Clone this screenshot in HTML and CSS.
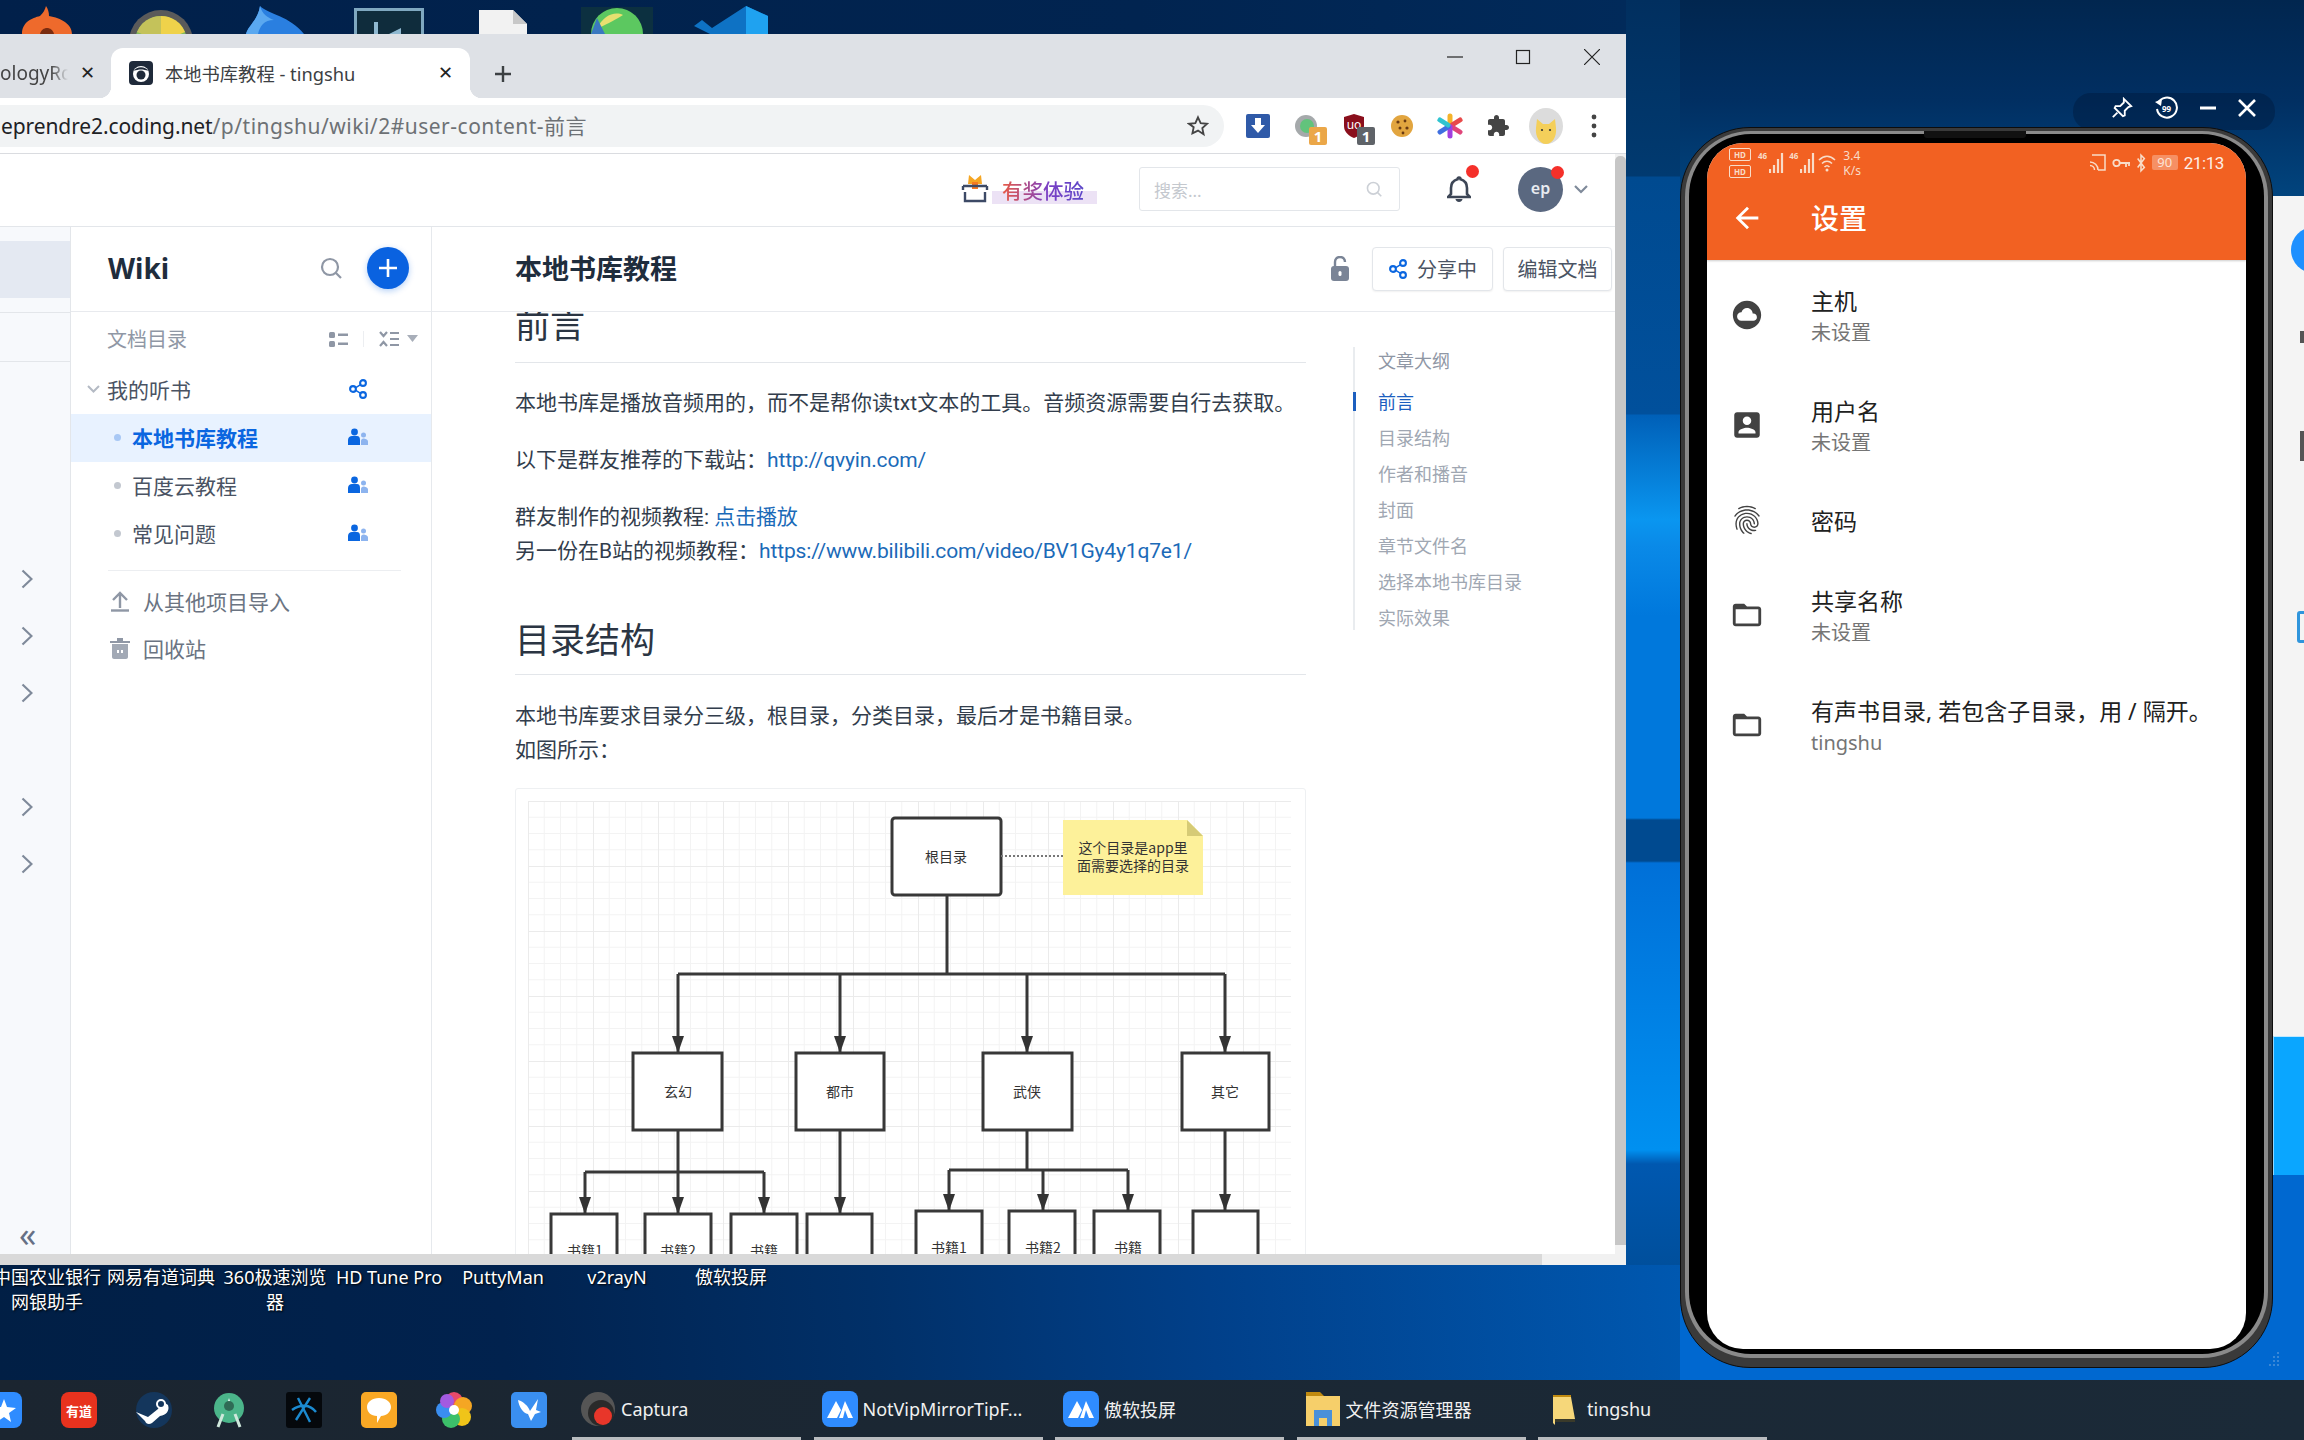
FILE: index.html
```html
<!DOCTYPE html>
<html lang="zh-CN">
<head>
<meta charset="utf-8">
<title>本地书库教程 - tingshu</title>
<link rel="stylesheet" href="styles.css">
</head>
<body>
<svg class="defs" width="0" height="0">
  <defs>
    <symbol id="i-share" viewBox="0 0 18 20"><g fill="none" stroke="currentColor" stroke-width="2.100"><circle cx="4" cy="10" r="2.900"/><circle cx="14" cy="4" r="2.900"/><circle cx="14" cy="16" r="2.900"/><path d="M6.800 8.700l4.400-2.900M6.800 11.300l4.400 2.900" stroke-width="1.400"/></g></symbol>
    <symbol id="i-member" viewBox="0 0 20 18"><circle cx="6.500" cy="4" r="3.400" fill="#0a66e0"/><path d="M0 17v-5c0-2.500 2-4 4-4h5c2 0 3 1.500 3 4v5z" fill="#0a66e0"/><circle cx="15.500" cy="7" r="2.500" fill="#8db4ef"/><path d="M13 17v-4c0-1.500 1-2.500 2.500-2.500S20 11.500 20 13.500V17z" fill="#8db4ef"/></symbol>
    <symbol id="i-search" viewBox="0 0 22 22"><g fill="none" stroke="currentColor" stroke-width="2.200"><circle cx="10" cy="10" r="8"/><path d="M16 16l5 5"/></g></symbol>
    <symbol id="i-chev" viewBox="0 0 12 20"><path d="M1.500 1.500l9 8.500-9 8.500" fill="none" stroke="#7f8a9a" stroke-width="2.200"/></symbol>
    <symbol id="m-cloud" viewBox="0 0 24 24"><path d="M12 2C6.480 2 2 6.480 2 12s4.480 10 10 10 10-4.480 10-10S17.520 2 12 2zm4.500 14H8c-1.660 0-3-1.340-3-3s1.340-3 3-3l.14.010C8.580 8.280 10.130 7 12 7c2.210 0 4 1.790 4 4h.5c1.380 0 2.500 1.120 2.500 2.500S17.880 16 16.500 16z"/></symbol>
    <symbol id="m-account" viewBox="0 0 24 24"><path d="M3 5v14c0 1.100.89 2 2 2h14c1.100 0 2-.9 2-2V5c0-1.100-.9-2-2-2H5c-1.110 0-2 .9-2 2zm12 4c0 1.660-1.340 3-3 3s-3-1.340-3-3 1.340-3 3-3 3 1.340 3 3zm-9 8c0-2 4-3.100 6-3.100s6 1.100 6 3.100v1H6v-1z"/></symbol>
    <symbol id="m-finger" viewBox="0 0 24 24"><path d="M17.810 4.470c-.08 0-.16-.02-.23-.06C15.660 3.420 14 3 12.010 3c-1.980 0-3.860.47-5.570 1.410-.24.13-.54.04-.68-.2-.13-.24-.04-.55.2-.68C7.820 2.520 9.860 2 12.010 2c2.130 0 3.990.47 6.030 1.520.25.13.34.43.21.67-.09.18-.26.28-.44.28zM3.500 9.720c-.1 0-.2-.03-.29-.09-.23-.16-.28-.47-.12-.7.99-1.400 2.250-2.500 3.750-3.270C9.980 4.040 14 4.030 17.150 5.650c1.500.77 2.760 1.860 3.750 3.250.16.22.11.54-.12.7-.23.16-.54.11-.7-.12-.9-1.260-2.040-2.250-3.390-2.940-2.870-1.470-6.540-1.470-9.400.01-1.360.7-2.500 1.700-3.400 2.960-.08.14-.23.21-.39.21zm6.250 12.070c-.13 0-.26-.05-.35-.15-.87-.87-1.340-1.430-2.010-2.640-.69-1.230-1.050-2.730-1.050-4.340 0-2.970 2.540-5.390 5.660-5.390s5.660 2.420 5.660 5.390c0 .28-.22.5-.5.5s-.5-.22-.5-.5c0-2.420-2.090-4.390-4.660-4.390s-4.660 1.970-4.660 4.390c0 1.440.32 2.770.93 3.850.64 1.150 1.080 1.640 1.850 2.420.19.2.19.51 0 .71-.11.1-.24.15-.37.15zm7.170-1.850c-1.190 0-2.240-.3-3.100-.89-1.490-1.010-2.380-2.650-2.380-4.390 0-.28.22-.5.5-.5s.5.22.5.5c0 1.410.72 2.740 1.940 3.560.71.48 1.540.71 2.540.71.24 0 .64-.03 1.040-.1.27-.05.53.13.58.41.05.27-.13.53-.41.58-.57.11-1.070.12-1.210.12zM14.910 22c-.04 0-.09-.01-.13-.02-1.590-.44-2.630-1.030-3.720-2.100-1.400-1.390-2.170-3.240-2.170-5.220 0-1.620 1.380-2.940 3.080-2.940s3.080 1.320 3.080 2.940c0 1.070.93 1.940 2.080 1.940s2.080-.87 2.080-1.940c0-3.770-3.250-6.830-7.250-6.830-2.840 0-5.440 1.580-6.610 4.030-.39.81-.59 1.760-.59 2.800 0 .78.07 2.010.67 3.610.1.26-.03.55-.29.64-.26.1-.55-.04-.64-.29-.49-1.310-.73-2.610-.73-3.960 0-1.200.23-2.290.68-3.240 1.330-2.790 4.280-4.600 7.510-4.600 4.550 0 8.250 3.510 8.250 7.830 0 1.620-1.380 2.940-3.080 2.940s-3.080-1.320-3.080-2.940c0-1.070-.93-1.940-2.080-1.940s-2.080.87-2.080 1.940c0 1.710.66 3.310 1.870 4.510.95.94 1.860 1.460 3.270 1.850.27.07.42.35.35.61-.05.23-.26.38-.47.38z"/></symbol>
    <symbol id="m-folder" viewBox="0 0 24 24"><path fill-rule="evenodd" d="M10 4H4c-1.100 0-2 .9-2 2v12c0 1.100.9 2 2 2h16c1.100 0 2-.9 2-2V8c0-1.100-.9-2-2-2h-8l-2-2zM4 8h16v10H4V8z"/></symbol>
    <symbol id="t-app" viewBox="0 0 36 36"><rect width="36" height="36" rx="8" fill="#2f8cff"/><path d="M5 27L14 10l5 9-4 8zM17 27l6-17 8 17h-5l-3-8-2 8z" fill="#fff"/></symbol>
    <marker id="ah" markerUnits="userSpaceOnUse" markerWidth="17" markerHeight="12" refX="17" refY="6" orient="auto"><path d="M0 0L17 6 0 12z" fill="#333"/></marker>
  </defs>
</svg>

<!-- desktop shortcut icons peeking above the browser -->
<div class="desk-top">
  <div class="desk-icon"><svg width="50" height="28" viewBox="0 0 50 28"><path d="M0 28C0 16 10 12 18 10c3-3 5-6 6-10 2 3 3 6 3 10 12 2 23 8 23 18z" fill="#ee6a2c"/><path d="M18 28c1-4 4-6 7-6s6 2 7 6z" fill="#7a2c10"/></svg></div>
  <div class="desk-icon"><svg width="64" height="26" viewBox="0 0 64 26"><circle cx="32" cy="34" r="32" fill="#5a5a5a"/><circle cx="32" cy="34" r="26" fill="#82b95c"/><path d="M32 8a26 26 0 0 1 24 16L32 34z" fill="#efd24a"/><path d="M32 8a26 26 0 0 0-24 16L32 34z" fill="#c4c25a"/></svg></div>
  <div class="desk-icon"><svg width="58" height="28" viewBox="0 0 58 28"><path d="M0 28C2 20 12 14 14 0c8 8 30 10 44 28z" fill="#2a7fe0"/><path d="M14 0c2 8 8 12 14 14-10 0-14 6-16 14H0C2 20 12 14 14 0z" fill="#5aa8f0"/></svg></div>
  <div class="desk-icon"><svg width="70" height="26" viewBox="0 0 70 26"><rect x="1.500" y="1.500" width="67" height="30" fill="#0f2c3c" stroke="#7fa8c0" stroke-width="3"/><path d="M20 26V14h4v12zM35 26l12-6v6z" fill="#8fb8d0"/></svg></div>
  <div class="desk-icon"><svg width="48" height="24" viewBox="0 0 48 24"><path d="M0 24V0h34l14 14v10z" fill="#f2f2f2"/><path d="M34 0v14h14z" fill="#c8c8c8"/></svg></div>
  <div class="desk-icon"><svg width="72" height="27" viewBox="0 0 72 27"><rect width="72" height="27" fill="#0c3040"/><circle cx="36" cy="27" r="26" fill="#5cc860"/><path d="M16 22C22 8 34 4 42 8c-6 4-14 8-26 14z" fill="#e8e070"/><path d="M10 27l6-16 8 16z" fill="#3a78c0"/></svg></div>
  <div class="desk-icon"><svg width="74" height="28" viewBox="0 0 74 28"><path d="M0 20l8-6 10 8L52 0l22 10v18H22L16 28z" fill="#0e72c4"/><path d="M52 0l22 10v18H52z" fill="#1fa2f0"/></svg></div>
</div>

<div class="browser">
  <div class="tabstrip">
    <div class="tab-old"><span class="tab-old-title">ologyRc</span><span class="tab-x">✕</span></div>
    <div class="tab-active">
      <svg class="favicon" width="24" height="24" viewBox="0 0 24 24"><rect width="24" height="24" rx="4" fill="#1f2a3a"/><circle cx="12" cy="13" r="8" fill="#fff"/><circle cx="12" cy="14" r="4.500" fill="#1f2a3a"/><path d="M5 10c2-5 12-5 14 0-4-2-10-2-14 0z" fill="#1f2a3a"/></svg>
      <span class="tab-title">本地书库教程 - tingshu</span>
      <span class="tab-x">✕</span>
    </div>
    <svg class="tab-plus" width="20" height="20" viewBox="0 0 20 20"><path d="M10 2v16M2 10h16" stroke="#3c4043" stroke-width="2.400"/></svg>
    <div class="wincontrols">
      <div class="wc"><svg width="16" height="16" viewBox="0 0 16 16"><path d="M0 8h16" stroke="#222" stroke-width="1.200"/></svg></div>
      <div class="wc"><svg width="16" height="16" viewBox="0 0 16 16"><rect x="1.500" y="1.500" width="13" height="13" fill="none" stroke="#222" stroke-width="1.200"/></svg></div>
      <div class="wc"><svg width="16" height="16" viewBox="0 0 16 16"><path d="M0 0l16 16M16 0L0 16" stroke="#222" stroke-width="1.200"/></svg></div>
    </div>
  </div>

  <div class="toolbar">
    <div class="omnibox">
      <span class="url"><b class="url-host">eprendre2.coding.net</b>/p/tingshu/wiki/2#user-content-前言</span>
      <svg class="star" width="22" height="22" viewBox="0 0 24 24"><path d="M12 2.500l2.900 6.300 6.900.8-5.100 4.700 1.400 6.800L12 17l-6.100 3.100 1.400-6.800L2.200 9.600l6.900-.8z" fill="none" stroke="#444" stroke-width="2"/></svg>
    </div>
    <div class="extensions">
      <div class="ext"><svg width="24" height="24" viewBox="0 0 24 24"><rect width="24" height="24" rx="2" fill="#2f5aa8"/><path d="M9 4h6v7h4l-7 8-7-8h4z" fill="#fff"/></svg></div>
      <div class="ext"><svg width="24" height="24" viewBox="0 0 24 24"><circle cx="12" cy="12" r="11" fill="#a5a9ab"/><circle cx="13" cy="12" r="7" fill="#62c37c"/></svg><span class="ext-badge badge-orange">1</span></div>
      <div class="ext"><svg width="24" height="24" viewBox="0 0 24 24"><path d="M12 0l10 3v9c0 6-5 10-10 12C7 22 2 18 2 12V3z" fill="#8a0f1c"/><text x="12" y="15" text-anchor="middle" class="ub-text">uo</text></svg><span class="ext-badge badge-gray">1</span></div>
      <div class="ext"><svg width="24" height="24" viewBox="0 0 24 24"><circle cx="12" cy="12" r="11" fill="#e2a53f"/><circle cx="8" cy="8" r="1.600" fill="#6a3a12"/><circle cx="15" cy="7" r="1.400" fill="#6a3a12"/><circle cx="17" cy="14" r="1.600" fill="#6a3a12"/><circle cx="10" cy="14" r="1.500" fill="#6a3a12"/><circle cx="13" cy="19" r="1.400" fill="#6a3a12"/></svg></div>
      <div class="ext"><svg width="26" height="26" viewBox="0 0 26 26"><g stroke-width="5" stroke-linecap="round"><path d="M13 3v9" stroke="#f5b32a"/><path d="M23 7l-8 5" stroke="#e84a4a"/><path d="M23 19l-8-5" stroke="#e0457a"/><path d="M13 23v-9" stroke="#a13fe0"/><path d="M3 19l8-5" stroke="#3f6fe0"/><path d="M3 7l8 5" stroke="#2fc4d0"/></g></svg></div>
      <div class="ext"><svg width="24" height="24" viewBox="0 0 24 24"><path d="M20.500 11H19V7c0-1.100-.9-2-2-2h-4V3.500C13 2.120 11.880 1 10.500 1S8 2.120 8 3.500V5H4c-1.100 0-1.990.9-1.990 2v3.800H3.500c1.490 0 2.700 1.210 2.700 2.700s-1.210 2.700-2.700 2.700H2V20c0 1.100.9 2 2 2h3.800v-1.500c0-1.490 1.210-2.700 2.700-2.700 1.490 0 2.700 1.210 2.700 2.700V22H17c1.100 0 2-.9 2-2v-4h1.500c1.380 0 2.500-1.120 2.500-2.500S21.880 11 20.500 11z" fill="#444"/></svg></div>
      <div class="ext"><svg width="34" height="36" viewBox="0 0 34 36"><ellipse cx="17" cy="18" rx="17" ry="18" fill="#dcdcdc"/><path d="M7 20l1-9 6 5h6l6-5 1 9c1 9-4 16-10 16S6 29 7 20z" fill="#f4cf5a"/><circle cx="13" cy="22" r="1.100" fill="#333"/><circle cx="21" cy="22" r="1.100" fill="#333"/></svg></div>
      <div class="ext"><svg width="6" height="24" viewBox="0 0 6 24"><circle cx="3" cy="3" r="2.400" fill="#444"/><circle cx="3" cy="12" r="2.400" fill="#444"/><circle cx="3" cy="21" r="2.400" fill="#444"/></svg></div>
    </div>
  </div>

  <div class="viewport">
    <div class="page">
      <header class="topbar">
        <div class="promo">
          <svg class="promo-gift" width="30" height="28" viewBox="0 0 30 28"><path d="M9 0l6 5 6-5 1 9H8z" fill="#f5a623"/><path d="M12 7h6v7h-6z" fill="#f57a23"/><path d="M3 11h24M3 11v4M27 11v4M5 17v9h20v-9" fill="none" stroke="#3d4a66" stroke-width="2.400"/></svg>
          <span class="promo-text">有奖体验</span>
        </div>
        <div class="topsearch"><span class="topsearch-ph">搜索...</span><svg class="topsearch-icon" width="16" height="18" viewBox="0 0 22 22"><use href="#i-search"/></svg></div>
        <div class="bell"><svg width="24" height="26" viewBox="0 0 24 26"><path d="M12 1.500c1 0 1.500.8 1.500 1.700C18 4.500 20 8 20 12v6l3 3H1l3-3v-6c0-4 2-7.500 6.500-8.800 0-.9.5-1.700 1.500-1.700z" fill="none" stroke="#3d4656" stroke-width="2.600"/><path d="M8.500 23h7c0 1.500-1.500 3-3.500 3s-3.500-1.500-3.500-3z" fill="#3d4656"/></svg><i class="reddot"></i></div>
        <div class="avatar">ep<i class="reddot"></i></div>
        <svg class="avatar-chev" width="14" height="9" viewBox="0 0 14 9"><path d="M1 1l6 6 6-6" fill="none" stroke="#7f8a9a" stroke-width="2.200"/></svg>
      </header>

      <div class="workspace">
        <nav class="leftnav">
          <div class="nav-top"><div class="nav-active"></div></div>
          <div class="nav-second"></div>
          <div class="nav-rows">
            <div class="nav-row"><svg width="12" height="20"><use href="#i-chev"/></svg></div>
            <div class="nav-row"><svg width="12" height="20"><use href="#i-chev"/></svg></div>
            <div class="nav-row"><svg width="12" height="20"><use href="#i-chev"/></svg></div>
            <div class="nav-row"></div>
            <div class="nav-row"><svg width="12" height="20"><use href="#i-chev"/></svg></div>
            <div class="nav-row"><svg width="12" height="20"><use href="#i-chev"/></svg></div>
          </div>
          <div class="nav-collapse">«</div>
        </nav>

        <aside class="wiki">
          <div class="wiki-head">
            <span class="wiki-title">Wiki</span>
            <svg class="wiki-search" width="22" height="22"><use href="#i-search"/></svg>
            <div class="wiki-add"><svg width="22" height="22" viewBox="0 0 22 22"><path d="M11 2v18M2 11h18" stroke="#fff" stroke-width="2.600"/></svg></div>
          </div>
          <div class="wiki-sub">
            <span class="wiki-sub-title">文档目录</span>
            <svg class="wiki-tool" width="19" height="16" viewBox="0 0 19 16"><g fill="#8f97a5"><rect x="0" y="1" width="6" height="6" rx="1.500"/><rect x="0" y="10" width="6" height="6" rx="1.500"/><rect x="9" y="2.500" width="10" height="2.500"/><rect x="9" y="11.500" width="10" height="2.500"/></g></svg>
            <span class="wiki-tool-sep"></span>
            <svg class="wiki-tool" width="20" height="16" viewBox="0 0 20 16"><g fill="none" stroke="#8f97a5" stroke-width="2.200"><path d="M1 1l3.500 4L8 1M1 15l3.500-4L8 15M11 2h9M11 8h9M11 14h9"/></g></svg>
            <svg class="wiki-caret" width="11" height="7" viewBox="0 0 11 7"><path d="M0 0h11L5.500 7z" fill="#a8aeb9"/></svg>
          </div>
          <div class="tree-row tree-root">
            <svg class="tree-caret" width="13" height="8" viewBox="0 0 13 8"><path d="M1 1l5.500 5.500L12 1" fill="none" stroke="#b4bac4" stroke-width="2"/></svg>
            <span class="tree-label">我的听书</span>
            <svg class="tree-icon tree-share" width="18" height="20"><use href="#i-share"/></svg>
          </div>
          <div class="tree-row tree-child is-selected"><i class="tree-dot"></i><span class="tree-label">本地书库教程</span><svg class="tree-icon" width="20" height="18"><use href="#i-member"/></svg></div>
          <div class="tree-row tree-child"><i class="tree-dot"></i><span class="tree-label">百度云教程</span><svg class="tree-icon" width="20" height="18"><use href="#i-member"/></svg></div>
          <div class="tree-row tree-child"><i class="tree-dot"></i><span class="tree-label">常见问题</span><svg class="tree-icon" width="20" height="18"><use href="#i-member"/></svg></div>
          <div class="wiki-divider"></div>
          <div class="wiki-action"><svg width="20" height="22" viewBox="0 0 20 22"><path d="M10 18V4M3 10l7-7 7 7" fill="none" stroke="#8f97a5" stroke-width="2.400"/><path d="M1 20.500h18" stroke="#8f97a5" stroke-width="2.400"/></svg><span>从其他项目导入</span></div>
          <div class="wiki-action"><svg width="20" height="22" viewBox="0 0 20 22"><path d="M0 4h20v2H0zM7 1h6v3H7z" fill="#8f97a5"/><path d="M2 7h16v13c0 1-1 2-2 2H4c-1 0-2-1-2-2z" fill="#a2a9b5"/><path d="M7 13h2v3H7zM11 13h2v3h-2z" fill="#fff"/></svg><span>回收站</span></div>
        </aside>

        <main class="doc">
          <div class="doc-head">
            <h1 class="doc-title">本地书库教程</h1>
            <svg class="doc-lock" width="18" height="25" viewBox="0 0 18 25"><path d="M4 11V6c0-3 2-5 5-5s5 2 5 5" fill="none" stroke="#7a8496" stroke-width="2.400"/><rect y="10" width="18" height="15" rx="3" fill="#7a8496"/><rect x="7.500" y="15" width="3" height="5" rx="1.500" fill="#fff"/></svg>
            <div class="btn"><svg class="btn-icon" width="18" height="20"><use href="#i-share"/></svg>分享中</div>
            <div class="btn">编辑文档</div>
          </div>
          <div class="doc-scroll">
            <article class="markdown">
              <h2 class="md-h2 md-first">前言</h2>
              <p class="md-p">本地书库是播放音频用的，而不是帮你读txt文本的工具。音频资源需要自行去获取。</p>
              <p class="md-p">以下是群友推荐的下载站：<a class="md-link">http://qvyin.com/</a></p>
              <p class="md-p">群友制作的视频教程: <a class="md-link">点击播放</a><br>另一份在B站的视频教程：<a class="md-link">https://www.bilibili.com/video/BV1Gy4y1q7e1/</a></p>
              <h2 class="md-h2">目录结构</h2>
              <p class="md-p">本地书库要求目录分三级，根目录，分类目录，最后才是书籍目录。<br>如图所示：</p>
              <div class="md-figure">
                <svg class="diagram" width="788" height="480" viewBox="517 790 788 480">
                  <defs>
                    <pattern id="grid" x="529" y="802" width="65" height="65" patternUnits="userSpaceOnUse">
                      <path d="M0 0V65M16.250 0V65M32.500 0V65M48.750 0V65M0 0H65M0 16.250H65M0 32.500H65M0 48.750H65" stroke="#f3f3f3" stroke-width="1" fill="none"/>
                      <path d="M0 0V65M0 0H65" stroke="#ebebeb" stroke-width="2" fill="none"/>
                    </pattern>
                  </defs>
                  <rect x="529" y="802" width="763" height="470" fill="url(#grid)"/>
                  <g class="dg-box">
                    <rect x="893" y="819" width="109" height="77" rx="3"/>
                    <rect x="634" y="1054" width="89" height="77"/>
                    <rect x="797" y="1054" width="88" height="77"/>
                    <rect x="984" y="1054" width="89" height="77"/>
                    <rect x="1183" y="1054" width="87" height="77"/>
                    <rect x="552" y="1215" width="66" height="70"/>
                    <rect x="646" y="1215" width="66" height="70"/>
                    <rect x="732" y="1215" width="66" height="70"/>
                    <rect x="808" y="1215" width="65" height="70"/>
                    <rect x="917" y="1212" width="66" height="70"/>
                    <rect x="1010" y="1212" width="66" height="70"/>
                    <rect x="1095" y="1212" width="66" height="70"/>
                    <rect x="1194" y="1212" width="65" height="70"/>
                  </g>
                  <g class="dg-line">
                    <path d="M948 896V975M679 975H1226"/>
                    <path d="M679 975V1054" marker-end="url(#ah)"/>
                    <path d="M841 975V1054" marker-end="url(#ah)"/>
                    <path d="M1028 975V1054" marker-end="url(#ah)"/>
                    <path d="M1226 975V1054" marker-end="url(#ah)"/>
                    <path d="M586 1173H765"/>
                    <path d="M586 1173V1215" marker-end="url(#ah)"/>
                    <path d="M679 1131V1215" marker-end="url(#ah)"/>
                    <path d="M765 1173V1215" marker-end="url(#ah)"/>
                    <path d="M841 1131V1215" marker-end="url(#ah)"/>
                    <path d="M1028 1131V1171M950 1171H1129"/>
                    <path d="M950 1171V1212" marker-end="url(#ah)"/>
                    <path d="M1044 1171V1212" marker-end="url(#ah)"/>
                    <path d="M1129 1171V1212" marker-end="url(#ah)"/>
                    <path d="M1226 1131V1212" marker-end="url(#ah)"/>
                  </g>
                  <path d="M1002 857H1064" stroke="#777" stroke-width="2" stroke-dasharray="2 2"/>
                  <path d="M1064 821H1188L1204 837V896H1064z" fill="#fdf19a"/>
                  <path d="M1188 821L1204 837H1188z" fill="#d6cb76"/>
                  <g class="dg-text">
                    <text x="947" y="863">根目录</text>
                    <text x="1134" y="854">这个目录是app里</text>
                    <text x="1134" y="872">面需要选择的目录</text>
                    <text x="679" y="1098">玄幻</text>
                    <text x="841" y="1098">都市</text>
                    <text x="1028" y="1098">武侠</text>
                    <text x="1226" y="1098">其它</text>
                    <text x="586" y="1257">书籍1</text>
                    <text x="679" y="1257">书籍2</text>
                    <text x="765" y="1257">书籍</text>
                    <text x="950" y="1254">书籍1</text>
                    <text x="1044" y="1254">书籍2</text>
                    <text x="1129" y="1254">书籍</text>
                  </g>
                </svg>
              </div>
            </article>
            <div class="toc">
              <div class="toc-item toc-head">文章大纲</div>
              <div class="toc-item toc-current">前言</div>
              <div class="toc-item">目录结构</div>
              <div class="toc-item">作者和播音</div>
              <div class="toc-item">封面</div>
              <div class="toc-item">章节文件名</div>
              <div class="toc-item">选择本地书库目录</div>
              <div class="toc-item toc-last">实际效果</div>
            </div>
          </div>
        </main>
      </div>
      <div class="hscroll"><div class="hscroll-thumb"></div></div>
    </div>
    <div class="vscroll"><div class="vscroll-thumb"></div></div>
  </div>
</div>

<div class="desk-labels">
  <div class="desk-label">中国农业银行网银助手</div>
  <div class="desk-label">网易有道词典</div>
  <div class="desk-label">360极速浏览器</div>
  <div class="desk-label">HD Tune Pro</div>
  <div class="desk-label">PuttyMan</div>
  <div class="desk-label">v2rayN</div>
  <div class="desk-label">傲软投屏</div>
</div>

<div class="mirror-controls">
  <svg width="22" height="22" viewBox="0 0 24 24"><path d="M14 2l8 8-3 1-4 4 0 5-2 1-9-9 1-2h5l4-4z" fill="none" stroke="#fff" stroke-width="2"/><path d="M7 17l-5 5" stroke="#fff" stroke-width="2"/></svg>
  <svg width="24" height="24" viewBox="0 0 24 24"><path d="M4 7a10 10 0 1 1-1 6" fill="none" stroke="#fff" stroke-width="2"/><path d="M1 6l7-3-1 7z" fill="#fff"/><text x="12.500" y="16" text-anchor="middle" class="mc-99">99</text></svg>
  <svg width="18" height="24" viewBox="0 0 18 24"><path d="M1 12h16" stroke="#fff" stroke-width="3"/></svg>
  <svg width="18" height="24" viewBox="0 0 18 24"><path d="M1 4l16 16M17 4L1 20" stroke="#fff" stroke-width="2.600"/></svg>
</div>

<div class="phone">
  <div class="phone-ring">
    <div class="phone-bezel">
      <div class="phone-screen">
        <div class="appbar">
          <div class="statusbar">
            <div class="sb-left">
              <div class="sb-hd"><span class="sb-hd-tag">HD</span><span class="sb-hd-tag">HD</span></div>
              <span class="sb-46">46</span>
              <svg width="16" height="20" viewBox="0 0 16 20"><path d="M1 20v-4M5 20v-8M9 20V6M13 20V0" stroke="#f8dcc8" stroke-width="2.200"/></svg>
              <span class="sb-46">46</span>
              <svg width="16" height="20" viewBox="0 0 16 20"><path d="M1 20v-4M5 20v-8M9 20V6M13 20V0" stroke="#f8dcc8" stroke-width="2.200"/></svg>
              <svg width="18" height="18" viewBox="0 0 18 18"><path d="M1 6c5-5 11-5 16 0M4 9.500c3-3 7-3 10 0M6.500 13c1.500-1.500 3.500-1.500 5 0" fill="none" stroke="#f8dcc8" stroke-width="1.600"/><circle cx="9" cy="16" r="1.500" fill="#f8dcc8"/></svg>
              <div class="sb-speed"><span>3.4</span><span>K/s</span></div>
            </div>
            <div class="sb-right">
              <svg width="17" height="17" viewBox="0 0 17 17"><path d="M3 1h13v15H9" fill="none" stroke="#f8dcc8" stroke-width="1.500"/><path d="M1 8a8 8 0 0 1 8 8M1 11.500A4.500 4.500 0 0 1 5.500 16" fill="none" stroke="#f8dcc8" stroke-width="1.500"/></svg>
              <svg width="18" height="12" viewBox="0 0 18 12"><circle cx="4.500" cy="6" r="3.200" fill="none" stroke="#f8dcc8" stroke-width="1.800"/><path d="M8 6h10M14 6v4M17 6v3" stroke="#f8dcc8" stroke-width="1.800"/></svg>
              <svg class="sb-bt" width="10" height="20" viewBox="0 0 8 18"><path d="M1 5l6 8-3 3V2l3 3-6 8" fill="none" stroke="#f8dcc8" stroke-width="1.400"/></svg>
              <span class="sb-batt">90</span>
              <span class="sb-time">21:13</span>
            </div>
          </div>
          <div class="apptitle">
            <svg class="appback" width="34" height="34" viewBox="0 0 24 24"><path d="M20 11H7.830l5.590-5.590L12 4l-8 8 8 8 1.410-1.410L7.830 13H20v-2z" fill="#fff"/></svg>
            <span class="apptitle-text">设置</span>
          </div>
        </div>
        <div class="setting"><svg class="setting-icon" width="34" height="34"><use href="#m-cloud"/></svg><div class="setting-text"><div class="setting-title">主机</div><div class="setting-sub">未设置</div></div></div>
        <div class="setting"><svg class="setting-icon" width="34" height="34"><use href="#m-account"/></svg><div class="setting-text"><div class="setting-title">用户名</div><div class="setting-sub">未设置</div></div></div>
        <div class="setting setting-single"><svg class="setting-icon" width="34" height="34"><use href="#m-finger"/></svg><div class="setting-text"><div class="setting-title">密码</div></div></div>
        <div class="setting"><svg class="setting-icon" width="34" height="34"><use href="#m-folder"/></svg><div class="setting-text"><div class="setting-title">共享名称</div><div class="setting-sub">未设置</div></div></div>
        <div class="setting"><svg class="setting-icon" width="34" height="34"><use href="#m-folder"/></svg><div class="setting-text"><div class="setting-title">有声书目录, 若包含子目录，用 / 隔开。</div><div class="setting-sub">tingshu</div></div></div>
      </div>
    </div>
  </div>
  <div class="phone-notch"></div>
  <svg class="phone-grip" width="14" height="18" viewBox="0 0 14 18"><g fill="#7fb0e0"><circle cx="12" cy="2" r=".8"/><circle cx="12" cy="6" r=".8"/><circle cx="8" cy="6" r=".8"/><circle cx="12" cy="10" r=".8"/><circle cx="8" cy="10" r=".8"/><circle cx="12" cy="14" r=".8"/><circle cx="8" cy="14" r=".8"/><circle cx="4" cy="14" r=".8"/></g></svg>
</div>

<div class="side-window">
  <div class="side-circle"></div>
  <div class="side-mark side-mark-a"></div>
  <div class="side-mark side-mark-b"></div>
  <div class="side-mark side-mark-c"></div>
</div>
<div class="side-light"></div>

<div class="taskbar">
  <div class="quick">
    <div class="quick-item"><svg width="36" height="36" viewBox="0 0 36 36"><rect width="36" height="36" rx="8" fill="#2f8cff"/><path d="M18 7l3 8 9 1-7 5 2 9-7-5-7 5 2-9-7-5 9-1z" fill="#fff"/></svg></div>
    <div class="quick-item"><svg width="36" height="36" viewBox="0 0 36 36"><rect width="36" height="36" rx="8" fill="#e8321e"/><text x="18" y="24" text-anchor="middle" class="yd-text">有道</text></svg></div>
    <div class="quick-item"><svg width="36" height="36" viewBox="0 0 36 36"><circle cx="18" cy="18" r="18" fill="#14365c"/><path d="M0 20l12 5 10-8 4-8 6 4c2 6-2 10-8 11l-8 7c-3 2-6 1-7-2z" fill="#fff"/><circle cx="25" cy="12" r="4" fill="#14365c" stroke="#fff" stroke-width="2"/></svg></div>
    <div class="quick-item"><svg width="32" height="36" viewBox="0 0 32 36"><circle cx="16" cy="16" r="15" fill="#4bb58a"/><path d="M16 6l3 10H13z" fill="#fff"/><circle cx="16" cy="14" r="5" fill="#2f6b55"/><path d="M10 22l-5 13M22 22l5 13" stroke="#cfe8dc" stroke-width="3"/></svg></div>
    <div class="quick-item"><svg width="36" height="36" viewBox="0 0 36 36"><rect width="36" height="36" rx="3" fill="#05080c"/><path d="M12 6l12 24M24 6L10 28M6 18c8-6 18-6 24 2" fill="none" stroke="#1b8ad0" stroke-width="2.400"/></svg></div>
    <div class="quick-item"><svg width="36" height="36" viewBox="0 0 36 36"><rect width="36" height="36" rx="5" fill="#f9a825"/><path d="M6 15c0-5 5-9 12-9s12 4 12 9-5 9-10 9l-4 7v-7C10 24 6 20 6 15z" fill="#fff"/></svg></div>
    <div class="quick-item"><svg width="36" height="36" viewBox="0 0 36 36"><circle cx="18" cy="9" r="9" fill="#e84a6a"/><circle cx="27" cy="14" r="9" fill="#f5a623"/><circle cx="26" cy="25" r="9" fill="#f0c419"/><circle cx="15" cy="27" r="9" fill="#3cc06a"/><circle cx="8" cy="18" r="8" fill="#3a8ef0"/><circle cx="11" cy="9" r="7" fill="#a35ae0"/><circle cx="18" cy="18" r="5" fill="#fff"/></svg></div>
    <div class="quick-item"><svg width="36" height="36" viewBox="0 0 36 36"><rect width="36" height="36" rx="5" fill="#3a8ff0"/><path d="M7 8c6 2 10 6 12 11l8-12-2 11 5 2-6 2-4 7-3-7C12 21 8 15 7 8z" fill="#fff"/></svg></div>
  </div>
  <div class="tasks">
    <div class="task"><div class="task-icon"><svg width="36" height="40" viewBox="0 0 36 40"><circle cx="18" cy="20" r="17" fill="#555"/><circle cx="21" cy="24" r="13" fill="#2a2a2a"/><circle cx="23" cy="27" r="9" fill="#e8362a"/></svg></div><span>Captura</span></div>
    <div class="task"><div class="task-icon"><svg width="36" height="36"><use href="#t-app"/></svg></div><span>NotVipMirrorTipF...</span></div>
    <div class="task"><div class="task-icon"><svg width="36" height="36"><use href="#t-app"/></svg></div><span>傲软投屏</span></div>
    <div class="task"><div class="task-icon"><svg width="34" height="34" viewBox="0 0 34 34"><path d="M0 4V0h14l4 4z" fill="#c08a10"/><path d="M0 4h34v30H0z" fill="#f6cf6a"/><path d="M8 34V18h18v16h-5v-8h-8v8z" fill="#4a90d8"/></svg></div><span>文件资源管理器</span></div>
    <div class="task"><div class="task-icon"><svg width="22" height="36" viewBox="0 0 22 36"><path d="M0 4h18v2H0z" fill="#c08a10"/><path d="M0 6h18l4 22H2v6l-2-2z" fill="#f6d77a"/><path d="M2 28h20v3H2z" fill="#3a3a2a"/></svg></div><span>tingshu</span></div>
  </div>
</div>
</body>
</html>
```
FILE: styles.css
```css
* { box-sizing: border-box; }
html, body { margin: 0; padding: 0; }
body {
  position: relative;
  width: 2304px;
  height: 1440px;
  overflow: hidden;
  font-family: "Noto Sans", "Noto Sans CJK SC", sans-serif;
  background-color: #0068d0;
  background-image:
    linear-gradient(90deg, #01204a, #012450 70%, #012a5a),
    linear-gradient(180deg, #01264f, #012f62 50%, #01457f),
    linear-gradient(180deg, #012f5f 0, #013a70 176px, #004a90 177px, #01509c 414px, #0060b8 415px, #0a96f0 520px, #0a8ae8 545px, #0078dc 616px, #0078dc 818px, #004a90 820px, #004a90 861px, #0070d8 863px, #0090f0 1150px, #0058b0 1164px, #004f9c 1265px),
    linear-gradient(85deg, #011f45 0, #01224e 30%, #013068 52%, #01408a 72%, #0058b0 100%);
  background-size: 1626px 34px, 624px 200px, 54px 1265px, 1680px 115px;
  background-position: 0 0, 1680px 0, 1626px 0, 0 1265px;
  background-repeat: no-repeat;
}
.defs { position: absolute; }

/* ---------- desktop ---------- */
.desk-top {
  position: absolute; left: -10px; top: 0; height: 34px;
  display: grid; grid-template-columns: repeat(7, 114px); justify-items: center; align-items: end;
  overflow: hidden;
}
.desk-icon { height: 34px; display: flex; align-items: flex-end; }
.desk-icon svg { display: block; }

.desk-labels {
  position: absolute; left: -10px; top: 1265px;
  display: grid; grid-template-columns: repeat(7, 114px);
  color: #fff; font-size: 18px; line-height: 25px; text-align: center;
  text-shadow: 1px 1px 2px #000;
}
.desk-label { padding: 0 3px; word-break: break-all; }

/* ---------- browser ---------- */
.browser {
  position: absolute; left: 0; top: 34px; width: 1626px; height: 1231px;
  display: flex; flex-direction: column; background: #fff;
}
.tabstrip { height: 64px; flex: none; background: #dee1e6; display: flex; align-items: flex-end; }
.tab-old { width: 111px; height: 50px; display: flex; align-items: center; overflow: hidden; flex: none; }
.tab-old-title {
  width: 68px; font-size: 19px; white-space: nowrap; overflow: hidden; color: #444;
  -webkit-mask-image: linear-gradient(90deg, #000 75%, transparent);
  mask-image: linear-gradient(90deg, #000 75%, transparent);
}
.tab-x { font-size: 18px; color: #222; font-family: "DejaVu Sans", sans-serif; line-height: 1; }
.tab-old .tab-x { margin-left: 12px; }
.tab-active {
  position: relative; width: 359px; height: 50px; flex: none; background: #fff;
  border-radius: 12px 12px 0 0; display: flex; align-items: center; padding-left: 18px;
}
.tab-active::before, .tab-active::after {
  content: ""; position: absolute; bottom: 0; width: 12px; height: 12px;
}
.tab-active::before { left: -12px; background: radial-gradient(circle at 0 0, transparent 12px, #fff 12.5px); }
.tab-active::after { right: -12px; background: radial-gradient(circle at 100% 0, transparent 12px, #fff 12.5px); }
.favicon { flex: none; }
.tab-title { margin-left: 12px; font-size: 18.300px; color: #3c4043; white-space: nowrap; }
.tab-active .tab-x { margin-left: auto; margin-right: 17px; }
.tab-plus { flex: none; margin: 0 0 14px 23px; }
.wincontrols { margin-left: auto; align-self: flex-start; display: flex; }
.wc { width: 68.500px; height: 46px; display: flex; align-items: center; justify-content: center; }

.toolbar { height: 56px; flex: none; display: flex; align-items: flex-start; padding-top: 7px; background: #fff; border-bottom: 1.500px solid #dadce0; }
.omnibox {
  width: 1224px; height: 42px; flex: none; background: #f1f3f4; border-radius: 0 21px 21px 0;
  display: flex; align-items: center; padding: 0 15px 0 1px;
}
.url { font-size: 21px; line-height: 42px; color: #6d7175; white-space: nowrap; letter-spacing: .5px; }
.url-host { font-weight: 400; color: #202124; letter-spacing: -.1px; }
.star { margin-left: auto; }
.extensions { display: flex; margin-left: 10px; }
.ext { position: relative; width: 48px; height: 42px; display: flex; align-items: center; justify-content: center; }
.ub-text { font-size: 12px; fill: #fff; font-family: "Noto Sans", sans-serif; }
.ext-badge {
  position: absolute; left: 27px; top: 22px; width: 18px; height: 18px; border-radius: 2px;
  color: #fff; font-size: 15px; line-height: 18px; text-align: center; font-weight: 700;
}
.badge-orange { background: #eba748; }
.badge-gray { background: #5f6368; }

.viewport { flex: 1; min-height: 0; display: flex; }
.page { flex: 1; min-width: 0; display: flex; flex-direction: column; }
.vscroll { width: 11px; flex: none; background: #f1f1f1; padding: 2px 0 20px; }
.vscroll-thumb { height: 100%; background: #c6c6c6; border-radius: 5px 5px 0 0; }
.hscroll { height: 11px; flex: none; background: #f1f1f1; }
.hscroll-thumb { width: 1542px; height: 100%; background: #d9d9d9; }

.topbar {
  height: 73px; flex: none; border-bottom: 1.500px solid #e3e6ea; display: flex; align-items: center;
  justify-content: flex-end; padding: 0 27px 2px 0;
}
.promo { display: flex; align-items: center; position: relative; margin-right: 42px; }
.promo::after { content: ""; position: absolute; left: 32px; right: 0; top: 17px; height: 13px; background: #ece2f5; z-index: 0; }
.promo-gift { position: relative; z-index: 1; }
.promo-text {
  position: relative; z-index: 1; margin: 3px 13px 0 12px; font-size: 20.500px; line-height: 28px; font-weight: 500;
  background: linear-gradient(90deg, #e85b45, #7b3fc4 55%, #5a46c8);
  -webkit-background-clip: text; background-clip: text; color: transparent;
}
.topsearch {
  width: 261px; height: 44px; border: 1px solid #e3e6ea; border-radius: 3px; display: flex; align-items: center;
  justify-content: space-between; padding: 0 17px 0 14px; margin-right: 47px; color: #ccd0d6;
}
.topsearch-ph { font-size: 17px; color: #c4c8ce; }
.bell { position: relative; width: 24px; height: 26px; margin-right: 47px; }
.bell svg { display: block; }
.reddot { position: absolute; width: 13px; height: 13px; border-radius: 50%; background: #f5302a; }
.bell .reddot { left: 19px; top: -11px; }
.avatar {
  position: relative; width: 45px; height: 45px; border-radius: 50%; background: #5a6880; color: #e8ebf0;
  font-size: 16px; font-weight: 600; line-height: 43px; text-align: center; margin-right: 11px;
}
.avatar .reddot { left: 33px; top: -1px; }

.workspace { flex: 1; min-height: 0; display: flex; }
.leftnav { width: 71px; flex: none; background: #f7f9fc; border-right: 1.500px solid #e3e6ea; display: flex; flex-direction: column; }
.nav-top { height: 86px; flex: none; padding-top: 14px; border-bottom: 1.500px solid #e3e6ea; }
.nav-active { height: 57px; background: #e4e9f2; }
.nav-second { height: 49px; flex: none; border-bottom: 1.500px solid #e3e6ea; }
.nav-rows { margin-top: 188px; flex: none; }
.nav-row { height: 57px; display: flex; align-items: center; padding-left: 21px; }
.nav-collapse { margin-top: auto; height: 36px; font-size: 34px; line-height: 32px; color: #667085; padding-left: 19px; }

.wiki { width: 361px; flex: none; border-right: 1.500px solid #e6e9ed; background: #fff; display: flex; flex-direction: column; }
.wiki-head { height: 85px; flex: none; display: flex; align-items: center; padding: 0 22px 2px 37px; border-bottom: 1.500px solid #e8eaee; }
.wiki-title { font-size: 28px; font-weight: 700; color: #1f2d3d; }
.wiki-search { margin-left: auto; color: #8f97a5; }
.wiki-add { width: 42px; height: 42px; margin-left: 25px; border-radius: 50%; background: #0a62e0; display: flex; align-items: center; justify-content: center; box-shadow: 0 2px 6px rgba(10,98,224,.3); }
.wiki-sub { height: 54px; flex: none; display: flex; align-items: center; padding: 0 13px 1px 36px; }
.wiki-sub-title { font-size: 20px; color: #8f97a5; margin-right: auto; }
.wiki-tool-sep { width: 1px; height: 16px; background: #eceef1; margin: 0 15px; }
.wiki-caret { margin-left: 8px; }
.tree-row { height: 48px; flex: none; display: flex; align-items: center; font-size: 21px; color: #4a5363; padding: 0 63px 2px 0; }
.tree-root { padding-left: 16px; }
.tree-caret { margin-right: 7px; }
.tree-child { padding-left: 43px; }
.tree-dot { width: 7px; height: 7px; border-radius: 50%; background: #c3c8d0; margin-right: 11px; flex: none; }
.tree-icon { margin-left: auto; flex: none; }
.tree-share { color: #0a66e0; margin-right: 1px; }
.is-selected { background: #e8f2ff; color: #0a66e0; font-weight: 700; }
.is-selected .tree-dot { background: #a8c8f5; }
.wiki-divider { height: 1px; background: #eceef1; margin: 12px 30px 6px 37px; flex: none; }
.wiki-action { height: 47px; flex: none; display: flex; align-items: center; gap: 13px; padding-left: 39px; font-size: 21px; color: #6b7482; }

.doc { flex: 1; min-width: 0; display: flex; flex-direction: column; }
.doc-head { height: 85px; flex: none; display: flex; align-items: center; padding: 0 3px 1px 83px; border-bottom: 1.500px solid #e8eaee; background: #fff; }
.doc-title { margin: 0 auto 0 0; font-size: 27px; line-height: 40px; font-weight: 700; color: #1f2d3d; }
.doc-lock { margin-right: 23px; }
.btn {
  height: 44px; display: flex; align-items: center; padding: 0 13.500px; font-size: 20px; color: #4a5363; border: 1.500px solid #e3e6ea;
  border-radius: 4px; margin-left: 10px; background: #fff; box-shadow: 0 1px 2px rgba(0,0,0,.06);
}
.doc-lock + .btn { margin-left: 0; padding: 0 15px 0 16px; }
.btn-icon { color: #0a66e0; margin-right: 10px; }
.doc-scroll { flex: 1; min-height: 0; overflow: hidden; display: flex; padding-left: 83px; align-items: flex-start; }
.markdown { width: 791px; flex: none; color: #323d4c; font-family: "Roboto", "Noto Sans CJK SC", sans-serif; font-size: 21px; line-height: 34px; }
.md-h2 { margin: 49px 0 24px; padding-bottom: 7px; border-bottom: 1.500px solid #e3e6ea; font-size: 35px; line-height: 50px; font-weight: 400; color: #2b3543; }
.md-first { margin-top: -10px; padding-bottom: 10px; margin-bottom: 23px; }
.md-p { margin: 0 0 23px; white-space: nowrap; }
.md-link { color: #1b6ab8; letter-spacing: -.15px; }
.md-figure { border: 1px solid #eef0f2; border-radius: 3px; margin-top: -2px; height: 480px; overflow: hidden; }
.diagram { display: block; }
.dg-box rect { fill: #fff; stroke: #383838; stroke-width: 3; }
.dg-line path { fill: none; stroke: #383838; stroke-width: 3; }
.dg-text text { font-size: 14px; fill: #333; text-anchor: middle; font-family: "Noto Sans CJK SC", sans-serif; }

.toc { margin-left: 47px; margin-top: 35px; width: 240px; border-left: 2px solid #e9ecef; position: relative; padding: 0 0 0 23px; }
.toc-item { height: 36px; line-height: 36px; font-size: 18px; color: #a0a7b2; white-space: nowrap; }
.toc-head { height: 37px; line-height: 28px; color: #8f97a5; }
.toc-last { height: 30px; line-height: 36px; }
.toc-current { color: #1c5fbf; position: relative; }
.toc-current::before { content: ""; position: absolute; left: -25px; top: 8px; width: 3px; height: 19px; background: #1c5fbf; }

/* ---------- mirror window ---------- */
.mirror-controls {
  position: absolute; left: 2073px; top: 93px; width: 202px; height: 37px; border-radius: 18px;
  background: rgba(1,22,55,.4); display: flex; align-items: center; justify-content: flex-end; gap: 21px; padding: 0 19px 8px 0;
}
.mc-99 { font-size: 8px; fill: #fff; font-weight: 700; font-family: "Noto Sans", sans-serif; }

.phone {
  position: absolute; left: 1680px; top: 127px; width: 593px; height: 1241px;
  background: #3a3a3a; border: 1.500px solid #0d0d0d; border-radius: 70px; padding: 3px 4px 9px;
}
.phone-ring { height: 100%; background: #8a8a8a; border-radius: 66px; padding: 3px 4px 4px; }
.phone-bezel { height: 100%; background: #000; border-radius: 62px; padding: 9px 18px 5px; }
.phone-screen { height: 100%; background: #fff; border-radius: 36px; overflow: hidden; }
.phone-notch { position: absolute; left: 243px; top: 3px; width: 102px; height: 7px; background: #111; border-radius: 0 0 3px 3px; }
.phone-grip { position: absolute; right: -8px; bottom: -2px; }

.appbar { height: 117px; background: #f26122; box-shadow: 0 1px 2px rgba(0,0,0,.2); }
.statusbar { height: 35px; display: flex; justify-content: space-between; align-items: center; padding: 4px 22px 0 22px; color: #f8dcc8; }
.sb-left, .sb-right { display: flex; align-items: center; gap: 2px; }
.sb-hd { display: flex; flex-direction: column; gap: 4px; margin-right: 3px; }
.sb-hd-tag { font-size: 8px; line-height: 11px; font-weight: 700; width: 22px; border: 1px solid #f8dcc8; border-radius: 2px; text-align: center; }
.sb-46 { font-size: 8px; font-weight: 700; align-self: flex-start; margin: 2px 0 0 2px; }
.sb-speed { display: flex; flex-direction: column; font-size: 12px; line-height: 15px; margin-left: 5px; }
.sb-right { gap: 6px; }
.sb-batt { width: 26px; height: 15px; background: rgba(255,255,255,.3); border-radius: 2px; font-size: 13px; line-height: 15px; text-align: center; color: #fbe3d6; }
.sb-time { font-family: "Roboto", sans-serif; font-size: 17px; letter-spacing: -.4px; line-height: 22px; color: #fdeee6; }
.apptitle { height: 82px; display: flex; align-items: center; padding: 0 0 2px 23px; }
.appback { flex: none; }
.apptitle-text { margin-left: 47px; color: #fff; font-size: 28px; line-height: 40px; font-weight: 500; }

.setting { height: 110px; display: flex; align-items: center; padding-left: 23px; }
.setting-single { height: 80px; }
.setting-icon { flex: none; fill: #424242; }
.setting-text { margin-left: 47px; padding-top: 3px; }
.setting-title { font-size: 23px; line-height: 31px; color: #212121; white-space: nowrap; }
.setting-sub { font-size: 20px; line-height: 31px; color: #757575; }

.side-window { position: absolute; left: 2273px; top: 196px; width: 31px; height: 840px; background: #f4f4f4; overflow: hidden; }
.side-circle { position: absolute; left: 18px; top: 31px; width: 46px; height: 46px; border-radius: 50%; background: #1e90ff; }
.side-mark { position: absolute; left: 27px; background: #555; }
.side-mark-a { top: 135px; width: 4px; height: 12px; }
.side-mark-b { top: 235px; width: 4px; height: 30px; }
.side-mark-c { top: 415px; left: 24px; width: 10px; height: 32px; background: none; border: 3px solid #2f95dc; border-radius: 3px; }
.side-light { position: absolute; left: 2273px; top: 1036px; width: 31px; height: 139px; background: #0aa6ff; border-top: 1px solid #bfe8ff; border-left: 1px solid #8fd6ff; }

/* ---------- taskbar ---------- */
.taskbar { position: absolute; left: 0; top: 1380px; width: 2304px; height: 60px; background: linear-gradient(90deg, #1b2530, #1b2a38); display: flex; overflow: hidden; color: #f1f1f1; }
.quick { display: flex; margin-left: -34px; flex: none; width: 606px; }
.quick-item { width: 75px; height: 60px; flex: none; display: flex; align-items: center; justify-content: center; padding-bottom: 1px; }
.yd-text { font-size: 13px; fill: #fff; font-weight: 700; font-family: "Noto Sans CJK SC", sans-serif; }
.tasks { display: flex; gap: 12.500px; flex: none; }
.task { width: 229px; height: 60px; flex: none; display: flex; align-items: center; padding: 0 0 0 8px; border-bottom: 3px solid #b9bcbf; font-size: 18px; white-space: nowrap; }
.task-icon { width: 36px; height: 40px; flex: none; display: flex; align-items: center; justify-content: center; margin-right: 5px; }
```
